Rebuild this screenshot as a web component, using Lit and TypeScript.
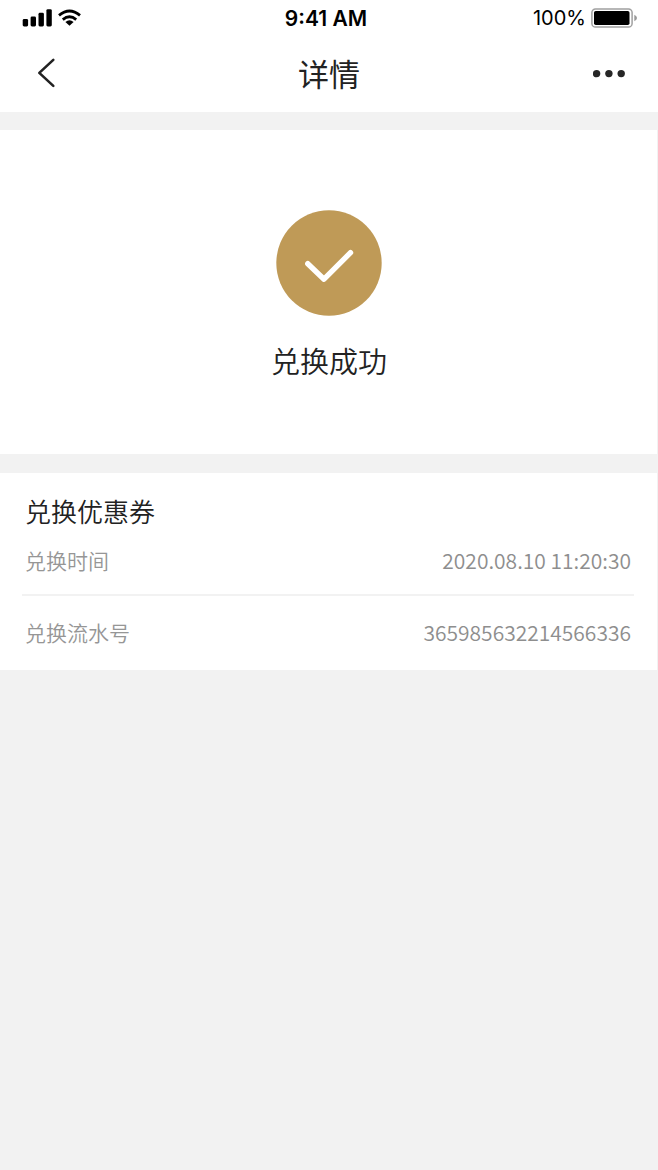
import { LitElement, html, css } from "lit";
import { customElement, property } from "lit/decorators.js";

@customElement("status-bar")
class StatusBar extends LitElement {
  static styles = css`
    :host {
      display: grid;
      grid-template-columns: 1fr auto 1fr;
      align-items: center;
      height: 36px;
      padding: 0 21px 0 22px;
      color: #000;
      font: 500 21px/36px Inter, sans-serif;
    }
    .signals,
    .power {
      display: flex;
      align-items: center;
    }
    .signals {
      gap: 6px;
    }
    .time {
      font-weight: 600;
      line-height: 34px;
      padding: 2px 7px 0 0;
    }
    .power {
      justify-content: flex-end;
      gap: 5px;
      font-size: 20px;
      font-weight: 400;
    }
    .power span {
      line-height: 36px;
    }
    svg {
      display: block;
    }
  `;

  render() {
    return html`
      <div class="signals">
        <svg width="30" height="20" viewBox="0 0 30 20" aria-hidden="true">
          <rect x="0.7" y="11" width="5.4" height="7.5" rx="1.4" />
          <rect x="8.6" y="8.5" width="5.4" height="10" rx="1.4" />
          <rect x="16.5" y="4.8" width="5.4" height="13.7" rx="1.4" />
          <rect x="24.4" y="1.2" width="5.4" height="17.3" rx="1.4" />
        </svg>
        <svg width="23" height="18" viewBox="0 0 23 18" aria-hidden="true">
          <g fill="none" stroke="#000" stroke-width="2.8">
            <path d="M1 6.4Q11.5 -2.4 22 6.4" />
            <path d="M4.8 10.6Q11.5 5 18.2 10.6" />
          </g>
          <path d="M7.4 13Q11.5 9.4 15.6 13L11.5 16.7Z" />
        </svg>
      </div>
      <div class="time">9:41 AM</div>
      <div class="power">
        <span>100%</span>
        <svg width="46" height="20" viewBox="0 0 46 20" aria-hidden="true">
          <rect x="0.9" y="0.9" width="40.2" height="18.2" rx="3.6" fill="none" stroke="#a0a0a0" stroke-width="1.5" />
          <rect x="3" y="3" width="35.5" height="14" rx="1.8" />
          <path d="M43.3 6.7Q46 8 46 10T43.3 13.3Z" fill="#999" />
        </svg>
      </div>
    `;
  }
}

@customElement("nav-bar")
class NavBar extends LitElement {
  @property() heading = "";

  static styles = css`
    :host {
      display: grid;
      grid-template-columns: 1fr auto 1fr;
      align-items: center;
      height: 76px;
      padding: 0 25px;
    }
    h1 {
      margin: 0;
      padding-bottom: 2px;
      font-size: 31px;
      line-height: 44px;
      font-weight: 400;
      color: #222;
    }
    button {
      display: flex;
      align-items: center;
      justify-content: center;
      width: 44px;
      height: 44px;
      padding: 0;
      border: 0;
      background: none;
      cursor: pointer;
    }
    .more {
      justify-self: end;
      justify-content: flex-end;
    }
  `;

  render() {
    return html`
      <button type="button" aria-label="返回">
        <svg width="20" height="32" viewBox="0 0 20 32" aria-hidden="true">
          <path d="M16.3 1.9L2.3 14.9L16.3 27.9" fill="none" stroke="#222" stroke-width="2.6" stroke-linecap="round" stroke-linejoin="round" />
        </svg>
      </button>
      <h1>${this.heading}</h1>
      <button class="more" type="button" aria-label="更多">
        <svg width="40" height="10" viewBox="0 0 40 10" aria-hidden="true" fill="#262626">
          <circle cx="3.6" cy="4.6" r="3.7" />
          <circle cx="15.9" cy="4.6" r="3.7" />
          <circle cx="28.2" cy="4.6" r="3.7" />
        </svg>
      </button>
    `;
  }
}

@customElement("app-root")
class AppRoot extends LitElement {
  static styles = css`
    :host {
      display: block;
      min-height: 100vh;
      background: #f2f2f2;
      color: #222;
      font-family: "Noto Sans CJK SC", sans-serif;
    }
    header {
      background: #fff;
    }
    main {
      display: flex;
      flex-direction: column;
      gap: 19px;
      padding: 18px 1px 0 0;
    }
    section {
      background: #fff;
    }
    .result {
      display: flex;
      flex-direction: column;
      align-items: center;
      gap: 22px;
      padding: 80px 0 72px 1px;
    }
    .result svg {
      display: block;
    }
    .result p {
      margin: 0;
      font-size: 29px;
      line-height: 44px;
      font-weight: 350;
    }
    .details {
      padding: 19px 23px 0 22px;
    }
    h2 {
      margin: 0;
      padding: 0 3px;
      font-size: 26px;
      line-height: 38px;
      font-weight: 350;
    }
    dl {
      margin: 0;
      font-size: 21px;
      line-height: 30px;
      font-weight: 350;
    }
    .row {
      display: flex;
      justify-content: space-between;
      padding: 21px 3px 23px;
    }
    .row:first-child {
      padding: 15px 3px 19px;
      border-bottom: 2px solid #f2f2f2;
    }
    dt,
    dd {
      margin: 0;
    }
    dt {
      color: #969696;
    }
    dd {
      color: #8e8e8e;
    }
  `;

  private rows = [
    ["兑换时间", "2020.08.10 11:20:30"],
    ["兑换流水号", "365985632214566336"],
  ];

  render() {
    return html`
      <header>
        <status-bar></status-bar>
        <nav-bar heading="详情"></nav-bar>
      </header>
      <main>
        <section class="result">
          <svg width="106" height="106" viewBox="0 0 106 106" aria-hidden="true">
            <circle cx="53" cy="53" r="52.7" fill="#bf9a57" />
            <path d="M31.8 53.7L48 69.2L74.5 42.7" fill="none" stroke="#fff" stroke-width="5.4" stroke-linecap="round" stroke-linejoin="round" />
          </svg>
          <p>兑换成功</p>
        </section>
        <section class="details">
          <h2>兑换优惠券</h2>
          <dl>
            ${this.rows.map(
              ([label, value]) => html`<div class="row"><dt>${label}</dt><dd>${value}</dd></div>`
            )}
          </dl>
        </section>
      </main>
    `;
  }
}
